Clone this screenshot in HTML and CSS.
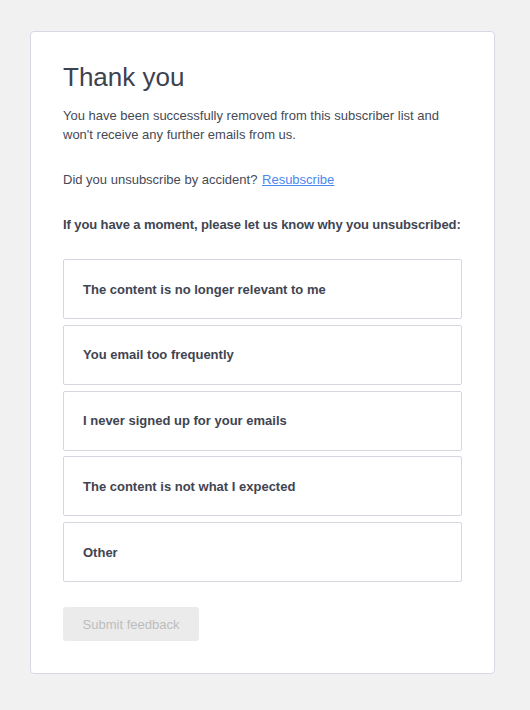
FILE: index.html
```html
<!DOCTYPE html>
<html lang="en">
<head>
<meta charset="utf-8">
<title>Unsubscribed</title>
<link rel="stylesheet" href="styles.css">
</head>
<body>
<div class="card">
  <h1 class="title">Thank you</h1>
  <p class="lead">You have been successfully removed from this subscriber list and won't receive any further emails from us.</p>
  <p class="accident">Did you unsubscribe by accident? <a class="link" href="#">Resubscribe</a></p>
  <p class="question">If you have a moment, please let us know why you unsubscribed:</p>
  <div class="options">
    <div class="option">The content is no longer relevant to me</div>
    <div class="option">You email too frequently</div>
    <div class="option">I never signed up for your emails</div>
    <div class="option">The content is not what I expected</div>
    <div class="option">Other</div>
  </div>
  <button class="submit" type="button" disabled>Submit feedback</button>
</div>
</body>
</html>
```

FILE: styles.css
```css
html, body {
  margin: 0;
  padding: 0;
}
body {
  background: #f1f1f1;
  font-family: "Liberation Sans", Arial, sans-serif;
  color: #454a57;
  padding: 31px 30px;
}
.card {
  box-sizing: border-box;
  width: 465px;
  background: #ffffff;
  border: 1px solid #d9d9e3;
  border-radius: 4px;
  padding: 30px 32px 32px 32px;
}
.title {
  margin: 0 0 13px 0;
  font-size: 26px;
  font-weight: normal;
  line-height: 31px;
  color: #3d4250;
}
.lead,
.accident,
.question {
  margin: 0;
  font-size: 13px;
  line-height: 19px;
}
.accident {
  margin-top: 26px;
}
.link {
  color: #4a88f0;
  text-decoration: underline;
  margin-left: 1px;
}
.question {
  margin-top: 26px;
  font-weight: bold;
  color: #404552;
  white-space: nowrap;
  letter-spacing: -0.1px;
}
.options {
  margin-top: 25px;
  display: flex;
  flex-direction: column;
  gap: 5.75px;
}
.option {
  box-sizing: border-box;
  height: 60px;
  border: 1px solid #d6d6df;
  border-radius: 2px;
  display: flex;
  align-items: center;
  padding: 0 19px;
  font-size: 13px;
  font-weight: bold;
  color: #3f4451;
}
.submit {
  margin-top: 25px;
  width: 136px;
  height: 34px;
  border: none;
  border-radius: 3px;
  background: #ebebeb;
  color: #bdbdbd;
  font-family: "Liberation Sans", Arial, sans-serif;
  font-size: 13px;
  padding: 0;
  display: block;
}
```
